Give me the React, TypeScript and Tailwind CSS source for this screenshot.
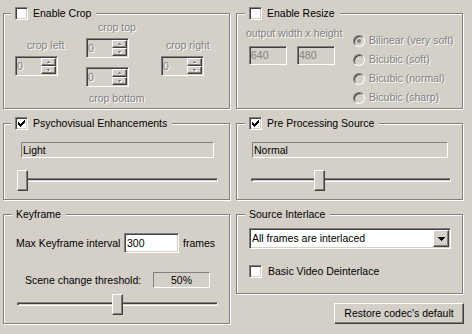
import React from "react";

const sunken =
  "border border-t-[#808080] border-l-[#808080] border-b-white border-r-white shadow-[inset_1px_1px_0_#404040,inset_-1px_-1px_0_#d4d0c8]";
const raised =
  "border border-t-white border-l-white border-b-[#404040] border-r-[#404040] shadow-[inset_-1px_-1px_0_#808080]";
const staticEdge = "border border-t-[#808080] border-l-[#808080] border-b-white border-r-white";
const disabledText = "text-[#808080] [text-shadow:1px_1px_0_#fff]";

const Check = ({ checked }: { checked?: boolean }) => (
  <span className={`flex h-[13px] w-[13px] shrink-0 items-center justify-center bg-white ${sunken}`}>
    {checked && (
      <svg width="7" height="7" viewBox="0 0 7 7" shapeRendering="crispEdges">
        <path
          d="M6 0h1v1h-1z M5 1h2v1h-2z M0 2h1v1h-1z M4 2h3v1h-3z M0 3h2v1h-2z M3 3h3v1h-3z M0 4h5v1h-5z M1 5h3v1h-3z M2 6h1v1h-1z"
          fill="#000"
        />
      </svg>
    )}
  </span>
);

const Radio = ({ checked }: { checked?: boolean }) => (
  <span
    className={`flex h-[12px] w-[12px] shrink-0 items-center justify-center rounded-full bg-[#d4d0c8] ${sunken}`}
  >
    {checked && <span className="h-[4px] w-[4px] rounded-full bg-[#808080]" />}
  </span>
);

const GroupBox = ({
  title,
  titleLeft,
  className,
  children,
}: {
  title: React.ReactNode;
  titleLeft: string;
  className: string;
  children: React.ReactNode;
}) => (
  <div className={`relative border border-[#808080] shadow-[inset_1px_1px_0_#fff,1px_1px_0_#fff] ${className}`}>
    <div className={`absolute -top-[7px] flex h-[13px] items-center gap-[5px] bg-[#d4d0c8] pl-[4px] pr-[5px] ${titleLeft}`}>
      {title}
    </div>
    {children}
  </div>
);

const SpinBtn = ({ up }: { up?: boolean }) => (
  <div className={`flex h-[8px] items-center justify-center bg-[#d4d0c8] ${raised}`}>
    <svg width="4" height="3" viewBox="0 0 4 3" shapeRendering="crispEdges">
      {up ? (
        <>
          <path d="M2 1h1v1h-1z M1 2h3v1h-3z" fill="#fff" />
          <path d="M1 0h1v1h-1z M0 1h3v1h-3z" fill="#808080" />
        </>
      ) : (
        <>
          <path d="M1 1h3v1h-3z M2 2h1v1h-1z" fill="#fff" />
          <path d="M0 0h3v1h-3z M1 1h1v1h-1z" fill="#808080" />
        </>
      )}
    </svg>
  </div>
);

const Spin = ({ className = "" }: { className?: string }) => (
  <div className={`flex h-[20px] w-[43px] bg-[#d4d0c8] p-[1px] ${sunken} ${className}`}>
    <span className="flex-1 leading-[16px] text-[#808080]">0</span>
    <div className="flex w-[15px] flex-col">
      <SpinBtn up />
      <SpinBtn />
    </div>
  </div>
);

const DisEdit = ({ children }: { children: React.ReactNode }) => (
  <div className={`flex h-[19px] w-[38px] items-center bg-[#d4d0c8] pl-[1px] text-[#808080] ${sunken}`}>
    {children}
  </div>
);

const Slider = ({
  width,
  value,
  max,
  className,
}: {
  width: number;
  value: number;
  max: number;
  className: string;
}) => (
  <div className={`relative h-[21px] ${className}`} style={{ width }}>
    <div className={`absolute left-0 right-0 top-[8px] h-[4px] ${sunken}`} />
    <div
      className={`absolute top-0 h-[21px] w-[11px] bg-[#d4d0c8] ${raised}`}
      style={{ left: Math.round((value / max) * (width - 11)) }}
    />
  </div>
);

export default function App() {
  return (
    <div className="h-[334px] w-[472px] overflow-hidden bg-[#d4d0c8] pl-[3px] pt-[13px] font-['Liberation_Sans',Arial,sans-serif] text-[10.5px] leading-[13px] text-black">
      <div className="grid grid-cols-[227px_227px] gap-x-[6px] gap-y-[14px]">
        {/* crop */}
        <GroupBox
          className="h-[96px]"
          titleLeft="left-[7px]"
          title={
            <>
              <Check />
              <span>Enable Crop</span>
            </>
          }
        >
          <div className={`flex items-start whitespace-nowrap ${disabledText}`}>
            <div className="ml-[11px] mt-[25px] flex w-[43px] shrink-0 flex-col">
              <span className="ml-[12px]">crop left</span>
              <Spin className="mt-[4px]" />
            </div>
            <div className="ml-[28px] mt-[7px] flex w-[43px] shrink-0 flex-col">
              <span className="ml-[12px]">crop top</span>
              <Spin className="mt-[4px]" />
              <Spin className="mt-[9px]" />
              <span className="ml-[3px] mt-[5px]">crop bottom</span>
            </div>
            <div className="ml-[32px] mt-[25px] flex w-[43px] shrink-0 flex-col">
              <span className="ml-[5px]">crop right</span>
              <Spin className="mt-[4px]" />
            </div>
          </div>
        </GroupBox>

        {/* resize */}
        <GroupBox
          className="h-[96px]"
          titleLeft="left-[8px]"
          title={
            <>
              <Check />
              <span>Enable Resize</span>
            </>
          }
        >
          <div className="flex items-start whitespace-nowrap">
            <div className="ml-[9px] mt-[13px] flex w-[107px] shrink-0 flex-col">
              <span className={disabledText}>output width x height</span>
              <div className="ml-[3px] mt-[6px] flex gap-[10px]">
                <DisEdit>640</DisEdit>
                <DisEdit>480</DisEdit>
              </div>
            </div>
            <div className="mt-[17px] flex flex-col">
              {["Bilinear (very soft)", "Bicubic (soft)", "Bicubic (normal)", "Bicubic (sharp)"].map((t, i) => (
                <div key={t} className="flex h-[19px] items-center gap-[4px]">
                  <Radio checked={i === 0} />
                  <span className={disabledText}>{t}</span>
                </div>
              ))}
            </div>
          </div>
        </GroupBox>

        {/* psychovisual */}
        <GroupBox
          className="h-[77px]"
          titleLeft="left-[7px]"
          title={
            <>
              <Check checked />
              <span>Psychovisual Enhancements</span>
            </>
          }
        >
          <div className={`ml-[17px] mt-[18px] flex h-[16px] w-[193px] items-center pl-[1px] ${staticEdge}`}>Light</div>
          <Slider className="ml-[13px] mt-[12px]" width={201} value={0} max={1} />
        </GroupBox>

        {/* pre processing */}
        <GroupBox
          className="h-[77px]"
          titleLeft="left-[8px]"
          title={
            <>
              <Check checked />
              <span>Pre Processing Source</span>
            </>
          }
        >
          <div className={`ml-[15px] mt-[18px] flex h-[16px] w-[196px] items-center pl-[1px] ${staticEdge}`}>Normal</div>
          <Slider className="ml-[14px] mt-[12px]" width={200} value={1} max={3} />
        </GroupBox>

        {/* keyframe */}
        <GroupBox className="h-[110px]" titleLeft="left-[8px]" title={<span>Keyframe</span>}>
          <div className="mt-[18px] flex h-[20px] items-center whitespace-nowrap">
            <span className="ml-[12px] w-[108px] shrink-0">Max Keyframe interval</span>
            <div className={`flex h-[20px] w-[55px] shrink-0 items-center bg-white pl-[2px] ${sunken}`}>300</div>
            <span className="ml-[4px]">frames</span>
          </div>
          <div className="mt-[19px] flex h-[16px] items-center whitespace-nowrap">
            <span className="ml-[21px] w-[128px] shrink-0">Scene change threshold:</span>
            <div className={`flex h-[16px] w-[57px] items-center justify-center ${staticEdge}`}>50%</div>
          </div>
          <Slider className="ml-[13px] mt-[6px]" width={201} value={50} max={100} />
        </GroupBox>

        {/* source interlace */}
        <div className="flex flex-col">
          <GroupBox className="h-[80px]" titleLeft="left-[8px]" title={<span>Source Interlace</span>}>
            <div className={`ml-[12px] mt-[13px] flex h-[21px] w-[202px] bg-white p-[1px] ${sunken}`}>
              <span className="flex-1 pl-[1px] leading-[17px]">All frames are interlaced</span>
              <div className={`flex w-[16px] items-center justify-center bg-[#d4d0c8] ${raised}`}>
                <svg width="7" height="4" viewBox="0 0 7 4" shapeRendering="crispEdges">
                  <path d="M0 0h7v1h-7z M1 1h5v1h-5z M2 2h3v1h-3z M3 3h1v1h-1z" fill="#000" />
                </svg>
              </div>
            </div>
            <div className="ml-[12px] mt-[16px] flex h-[13px] items-center gap-[6px]">
              <Check />
              <span>Basic Video Deinterlace</span>
            </div>
          </GroupBox>
          <button
            className={`-mr-[1px] mt-[9px] flex h-[21px] w-[130px] items-center justify-center self-end bg-[#d4d0c8] ${raised}`}
          >
            Restore codec's default
          </button>
        </div>
      </div>
    </div>
  );
}
